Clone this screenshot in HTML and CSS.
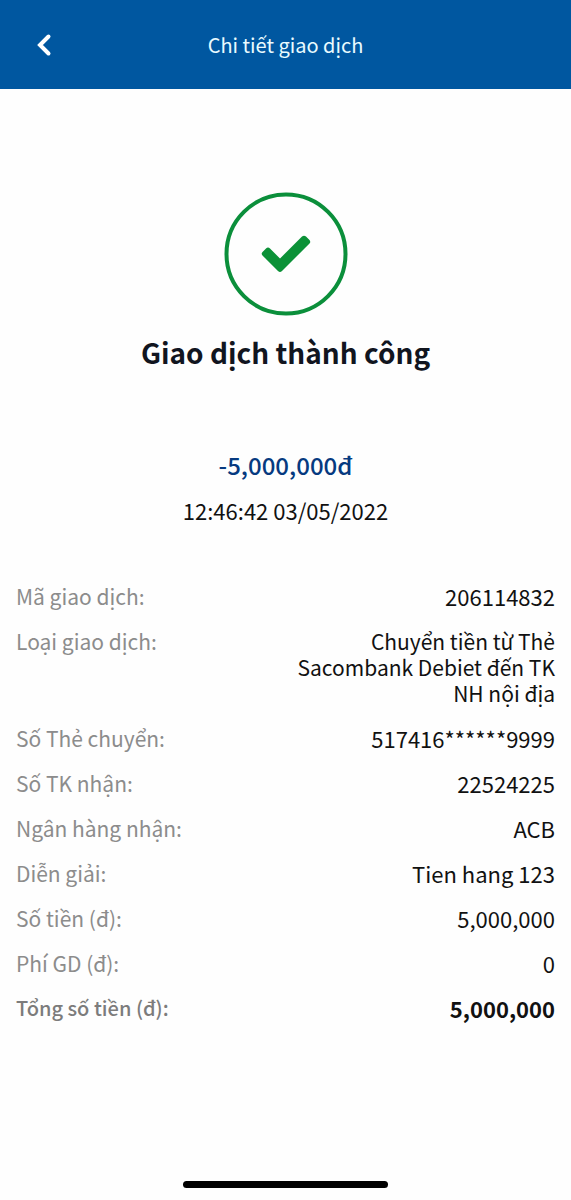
FILE: index.html
```html
<!DOCTYPE html>
<html lang="vi">
<head>
<meta charset="utf-8">
<meta name="viewport" content="width=device-width, initial-scale=1">
<title>Chi tiết giao dịch</title>
<link rel="stylesheet" href="styles.css">
</head>
<body class="screen">
  <header class="topbar">
    <button class="back" type="button" aria-label="Quay lại">
      <svg class="back-icon" viewBox="0 0 16 24" aria-hidden="true"><path d="M12.500 3.500 4 12l8.500 8.500"/></svg>
    </button>
    <h1 class="title">Chi tiết giao dịch</h1>
  </header>
  <main class="content">
    <section class="status">
      <svg class="check" viewBox="0 0 124 124" aria-hidden="true">
        <circle cx="62" cy="62" r="59.500"/>
        <path d="M38.500 60 42 56.500Q44 54.500 46 56.500L56 66.500 78 44.500Q80 43 82 44.500L85.500 48Q87 50 85.500 51.500L58 79Q56 81 54 79L38.500 63.500Q36.800 61.800 38.500 60Z"/>
      </svg>
      <h2 class="result">Giao dịch thành công</h2>
    </section>
    <section class="summary">
      <p class="amount">-5,000,000đ</p>
      <p class="time">12:46:42 03/05/2022</p>
    </section>
    <dl class="details">
      <div class="row"><dt>Mã giao dịch:</dt><dd>206114832</dd></div>
      <div class="row"><dt>Loại giao dịch:</dt><dd class="long">Chuyển tiền từ Thẻ Sacombank Debiet đến TK NH nội địa</dd></div>
      <div class="row"><dt>Số Thẻ chuyển:</dt><dd>517416******9999</dd></div>
      <div class="row"><dt>Số TK nhận:</dt><dd>22524225</dd></div>
      <div class="row"><dt>Ngân hàng nhận:</dt><dd>ACB</dd></div>
      <div class="row"><dt>Diễn giải:</dt><dd>Tien hang 123</dd></div>
      <div class="row"><dt>Số tiền (đ):</dt><dd>5,000,000</dd></div>
      <div class="row"><dt>Phí GD (đ):</dt><dd>0</dd></div>
      <div class="row total"><dt>Tổng số tiền (đ):</dt><dd>5,000,000</dd></div>
    </dl>
  </main>
  <footer class="home"><div class="home-bar"></div></footer>
</body>
</html>
```
FILE: styles.css
```css
* { box-sizing: border-box; }

.screen {
  margin: 0;
  min-height: 100vh;
  display: flex;
  flex-direction: column;
  background: #fefefe;
  color: #111;
  font-family: "Noto Sans CJK SC", "Noto Sans", sans-serif;
  font-size: 22px;
  line-height: 26px;
}

.topbar {
  display: grid;
  grid-template-columns: 56px 1fr 56px;
  align-items: center;
  padding: 0 16px;
  height: 89px;
  background: #0057a0;
  color: #e9fbff;
}

.back {
  display: flex;
  justify-content: center;
  padding: 8px;
  border: 0;
  background: none;
  color: #fff;
  cursor: pointer;
}

.back-icon {
  width: 16px;
  height: 24px;
  fill: none;
  stroke: currentColor;
  stroke-width: 4;
  stroke-linecap: round;
}

.title {
  margin: 0;
  text-align: center;
  font-size: 20px;
  font-weight: 400;
}

.content { flex: 1; }

.status {
  display: flex;
  flex-direction: column;
  align-items: center;
  gap: 18px;
  padding-top: 103px;
}

.check {
  width: 124px;
  height: 124px;
  fill: #0b9137;
}

.check circle {
  fill: none;
  stroke: #0b8f3b;
  stroke-width: 4;
}

.result {
  margin: 0;
  font-size: 28px;
  line-height: 36px;
  font-weight: 700;
  color: #11151f;
}

.summary {
  display: flex;
  flex-direction: column;
  align-items: center;
  gap: 19px;
  padding-top: 82px;
}

.summary p { margin: 0; }

.amount {
  font-size: 24px;
  font-weight: 500;
  color: #063a80;
}

.details {
  display: flex;
  flex-direction: column;
  gap: 19px;
  margin: 0;
  padding: 60px 16px 40px;
}

.row {
  display: flex;
  justify-content: space-between;
  gap: 16px;
}

.row dt {
  font-size: 21px;
  color: #8c8c8c;
}

.row dd {
  margin: 0;
  max-width: 50%;
  text-align: right;
}

.row .long { font-size: 21px; }

.total { font-weight: 700; }

.total dt {
  font-size: 20px;
  font-weight: 500;
  color: #7c7c7c;
}

.home {
  display: flex;
  justify-content: center;
  padding-bottom: 12px;
}

.home-bar {
  width: 36%;
  height: 7px;
  border-radius: 4px;
  background: #000;
}
```
